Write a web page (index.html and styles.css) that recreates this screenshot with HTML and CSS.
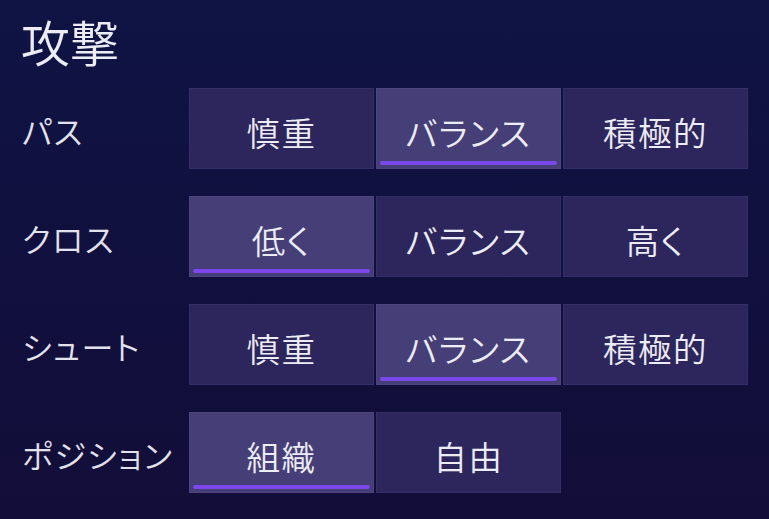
FILE: index.html
```html
<!DOCTYPE html>
<html lang="ja">
<head>
<meta charset="utf-8">
<link rel="stylesheet" href="styles.css">
</head>
<body>
<main class="panel">
  <h1 class="title">攻撃</h1>
  <div class="grid">
    <div class="label">パス</div>
    <div class="opt">慎重</div>
    <div class="opt sel">バランス</div>
    <div class="opt">積極的</div>

    <div class="label">クロス</div>
    <div class="opt sel">低く</div>
    <div class="opt">バランス</div>
    <div class="opt">高く</div>

    <div class="label">シュート</div>
    <div class="opt">慎重</div>
    <div class="opt sel">バランス</div>
    <div class="opt">積極的</div>

    <div class="label">ポジション</div>
    <div class="opt sel">組織</div>
    <div class="opt">自由</div>
    <div class="empty"></div>
  </div>
</main>
</body>
</html>
```

FILE: styles.css
```css
html, body {
  margin: 0;
  padding: 0;
}
body {
  width: 769px;
  height: 519px;
  overflow: hidden;
  background: linear-gradient(180deg, #0f1444 0%, #110f3d 60%, #130e39 100%);
  font-family: "Noto Sans CJK JP", "Noto Sans", sans-serif;
  font-feature-settings: "palt";
  font-weight: 350;
  color: #ececf4;
}
.panel {
  padding: 11px 0 0 21px;
}
.title {
  margin: 0;
  font-size: 49px;
  font-weight: 350;
  line-height: 60px;
  height: 60px;
  letter-spacing: 0;
}
.grid {
  margin-top: 17px;
  margin-left: 1px;
  display: grid;
  grid-template-columns: 165px repeat(3, 185px);
  grid-auto-rows: 81px;
  column-gap: 2px;
  row-gap: 27px;
}
.label {
  display: flex;
  align-items: center;
  font-size: 32px;
  letter-spacing: 1.5px;
  color: #e2e2ec;
  padding-top: 3px;
  white-space: nowrap;
}
.opt {
  position: relative;
  display: flex;
  align-items: center;
  justify-content: center;
  font-size: 33.5px;
  letter-spacing: 1.5px;
  padding-top: 5px;
  box-sizing: border-box;
  background: #2c265c;
  border: 1px solid #342e66;
  color: #ececf4;
}
.opt.sel {
  background: #463f77;
  border-color: #4c457d;
}
.opt.sel::after {
  content: "";
  position: absolute;
  left: 3px;
  right: 3px;
  bottom: 3px;
  height: 4px;
  border-radius: 2px;
  background: #7a48ea;
}
```
